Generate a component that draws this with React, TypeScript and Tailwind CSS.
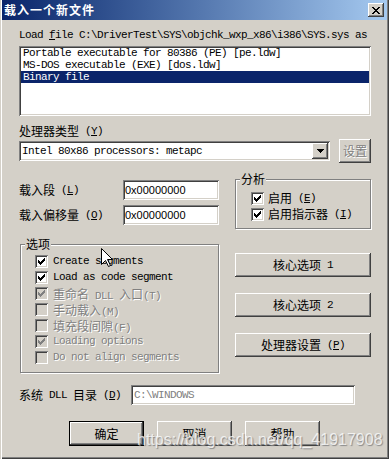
import React from 'react'

const cjk = "font-['Noto_Sans_CJK_SC',sans-serif] text-[12px] leading-[12px]"
const asc = "font-['Liberation_Mono','Noto_Sans_CJK_SC',monospace] text-[11px] leading-[12px] tracking-[-0.6px]"
const raised =
  'bg-[#d4d0c8] shadow-[inset_-1px_-1px_0_#404040,inset_1px_1px_0_#ffffff,inset_-2px_-2px_0_#808080,inset_2px_2px_0_#d4d0c8]'
const sunken =
  'bg-white shadow-[inset_1px_1px_0_#808080,inset_-1px_-1px_0_#ffffff,inset_2px_2px_0_#404040,inset_-2px_-2px_0_#d4d0c8]'
const off = 'text-[#808080] [text-shadow:1px_1px_0_#ffffff]'

function Check({ checked, disabled }: { checked?: boolean; disabled?: boolean }) {
  const c = disabled ? '#808080' : '#000000'
  return (
    <span
      className={`block w-[13px] h-[13px] shrink-0 ${disabled ? 'bg-[#d4d0c8]' : 'bg-white'} shadow-[inset_1px_1px_0_#808080,inset_-1px_-1px_0_#ffffff,inset_2px_2px_0_#404040,inset_-2px_-2px_0_#d4d0c8]`}
    >
      {checked && (
        <svg width="13" height="13" viewBox="0 0 13 13" shapeRendering="crispEdges">
          <g fill={c}>
            <rect x="9" y="3" width="1" height="1" />
            <rect x="8" y="4" width="2" height="1" />
            <rect x="3" y="5" width="1" height="1" />
            <rect x="7" y="5" width="3" height="1" />
            <rect x="3" y="6" width="2" height="1" />
            <rect x="6" y="6" width="3" height="1" />
            <rect x="3" y="7" width="5" height="1" />
            <rect x="4" y="8" width="3" height="1" />
            <rect x="5" y="9" width="1" height="1" />
          </g>
        </svg>
      )}
    </span>
  )
}

function Group({ title, className, children }: { title: string; className: string; children: React.ReactNode }) {
  return (
    <div className={`relative border border-[#808080] shadow-[inset_1px_1px_0_#ffffff,1px_1px_0_#ffffff] ${className}`}>
      <span className={`absolute -top-[7px] left-[4px] px-[1px] bg-[#d4d0c8] ${cjk}`}>{title}</span>
      {children}
    </div>
  )
}

function Btn({ className, children, disabled }: { className: string; children: React.ReactNode; disabled?: boolean }) {
  return (
    <div className={`flex items-center justify-center ${raised} ${cjk} ${disabled ? off : ''} ${className}`}>
      {children}
    </div>
  )
}

export default function App() {
  return (
    <div className="relative w-[389px] h-[459px] overflow-hidden bg-[#d4d0c8] text-black shadow-[inset_1px_0_0_#d4d0c8,inset_2px_0_0_#ffffff,inset_-1px_-1px_0_#404040,inset_-2px_-2px_0_#808080]">
      {/* title bar */}
      <div className="mx-[2px] h-[20px] flex items-center justify-between bg-linear-to-r from-[#0a246a] to-[#a6caf0] pl-[2px] pr-[3px]">
        <span className="font-['Noto_Sans_CJK_SC',sans-serif] text-[12px] font-bold tracking-[1px] text-white">
          载入一个新文件
        </span>
        <div className={`w-[16px] h-[14px] flex items-center justify-center ${raised}`}>
          <svg width="8" height="7" viewBox="0 0 8 7" shapeRendering="crispEdges">
            <path d="M0 0h2v1h-2zM6 0h2v1h-2zM1 1h2v1h-2zM5 1h2v1h-2zM2 2h4v1h-4zM3 3h2v1h-2zM2 4h4v1h-4zM1 5h2v1h-2zM5 5h2v1h-2zM0 6h2v1h-2zM6 6h2v1h-2z" fill="#000" />
          </svg>
        </div>
      </div>

      <div className="pl-[19px] pt-[9px]">
        <div className={`${asc} h-[12px]`}>
          Load <u>f</u>ile C:\DriverTest\SYS\objchk_wxp_x86\i386\SYS.sys as
        </div>

        <div className={`mt-[5px] w-[352px] h-[70px] pt-[1px] ${sunken}`}>
          <div className={`${asc} h-[12px] mx-[2px] px-[2px]`}>Portable executable for 80386 (PE) [pe.ldw]</div>
          <div className={`${asc} h-[12px] mx-[2px] px-[2px]`}>MS-DOS executable (EXE) [dos.ldw]</div>
          <div className={`${asc} h-[12px] mx-[2px] px-[2px] bg-[#0a246a] text-white`}>Binary file</div>
        </div>

        <div className="mt-[9px] h-[12px] flex items-center">
          <span className={cjk}>处理器类型</span>
          <span className={asc}>&nbsp;(<u>Y</u>)</span>
        </div>

        <div className="mt-[2px] h-[24px] flex items-center">
          <div className={`w-[311px] h-[20px] flex items-center justify-between pl-[3px] pr-[2px] ${sunken}`}>
            <span className={asc}>Intel 80x86 processors: metapc</span>
            <div className={`w-[16px] h-[16px] flex items-center justify-center ${raised}`}>
              <svg width="7" height="4" viewBox="0 0 7 4" shapeRendering="crispEdges">
                <path d="M0 0h7v1h-7zM1 1h5v1h-5zM2 2h3v1h-3zM3 3h1v1h-1z" fill="#000" />
              </svg>
            </div>
          </div>
          <Btn className="ml-[9px] w-[32px] h-[24px]" disabled>
            设置
          </Btn>
        </div>

        <div className="mt-[16px] flex items-start">
          <div className="w-[200px] pt-[1px]">
            <div className="h-[20px] flex items-center">
              <div className="w-[104px] flex items-center">
                <span className={cjk}>载入段</span>
                <span className={asc}>&nbsp;(<u>L</u>)</span>
              </div>
              <div className={`w-[96px] h-[20px] flex items-center pl-[2px] font-['Liberation_Sans',sans-serif] text-[11px] ${sunken}`}>
                0x00000000
              </div>
            </div>
            <div className="mt-[5px] h-[20px] flex items-center">
              <div className="w-[104px] flex items-center">
                <span className={cjk}>载入偏移量</span>
                <span className={asc}>&nbsp;(<u>O</u>)</span>
              </div>
              <div className={`w-[96px] h-[20px] flex items-center pl-[2px] font-['Liberation_Sans',sans-serif] text-[11px] ${sunken}`}>
                0x00000000
              </div>
            </div>
          </div>

          <Group title="分析" className="ml-[16px] w-[136px] h-[50px] pt-[10px] pl-[15px]">
            <div className="h-[16px] flex items-center gap-[4px]">
              <Check checked />
              <span className={cjk}>启用</span>
              <span className={`${asc} -ml-[4px]`}>&nbsp;(<u>E</u>)</span>
            </div>
            <div className="h-[16px] flex items-center gap-[4px]">
              <Check checked />
              <span className={cjk}>启用指示器</span>
              <span className={`${asc} -ml-[4px]`}>&nbsp;(<u>I</u>)</span>
            </div>
          </Group>
        </div>

        <div className="mt-[15px] flex items-start">
          <Group title="选项" className="ml-[1px] w-[199px] h-[129px] pt-[8px] pl-[14px]">
            <div className="h-[16px] flex items-center gap-[5px]">
              <Check checked />
              <span className={asc}>Create segments</span>
            </div>
            <div className="h-[16px] flex items-center gap-[5px]">
              <Check checked />
              <span className={asc}>Load as code segment</span>
            </div>
            <div className={`h-[16px] flex items-center gap-[5px] ${off}`}>
              <Check checked disabled />
              <span>
                <span className={cjk}>重命名</span>
                <span className={asc}>&nbsp;DLL&nbsp;</span>
                <span className={cjk}>入口</span>
                <span className={asc}>(T)</span>
              </span>
            </div>
            <div className={`h-[16px] flex items-center gap-[5px] ${off}`}>
              <Check disabled />
              <span>
                <span className={cjk}>手动载入</span>
                <span className={asc}>(M)</span>
              </span>
            </div>
            <div className={`h-[16px] flex items-center gap-[5px] ${off}`}>
              <Check disabled />
              <span>
                <span className={cjk}>填充段间隙</span>
                <span className={asc}>(F)</span>
              </span>
            </div>
            <div className={`h-[16px] flex items-center gap-[5px] ${off}`}>
              <Check checked disabled />
              <span className={asc}>Loading options</span>
            </div>
            <div className={`h-[16px] flex items-center gap-[5px] ${off}`}>
              <Check disabled />
              <span className={asc}>Do not align segments</span>
            </div>
          </Group>

          <div className="ml-[16px] mt-[9px] flex flex-col gap-[16px]">
            <Btn className="w-[136px] h-[24px]">
              核心选项<span className={asc}>&nbsp;1</span>
            </Btn>
            <Btn className="w-[136px] h-[24px]">
              核心选项<span className={asc}>&nbsp;2</span>
            </Btn>
            <Btn className="w-[136px] h-[24px]">
              处理器设置<span className={asc}>&nbsp;(<u>P</u>)</span>
            </Btn>
          </div>
        </div>

        <div className="mt-[12px] h-[20px] flex items-center">
          <div className="w-[112px] flex items-center">
            <span className={cjk}>系统</span>
            <span className={asc}>&nbsp;DLL&nbsp;</span>
            <span className={cjk}>目录</span>
            <span className={asc}>&nbsp;(<u>D</u>)</span>
          </div>
          <div className={`w-[224px] h-[20px] flex items-center pl-[3px] text-[#808080] ${asc} ${sunken}`}>
            C:\WINDOWS
          </div>
        </div>

        <div className="mt-[16px] ml-[50px] flex gap-[13px]">
          <div className="w-[75px] h-[25px] border border-black">
            <Btn className="w-full h-full">确定</Btn>
          </div>
          <Btn className="w-[75px] h-[25px]">取消</Btn>
          <Btn className="w-[75px] h-[25px]">帮助</Btn>
        </div>
      </div>

      {/* watermark */}
      <div className="absolute left-[137px] top-[430px] font-['Liberation_Sans',sans-serif] text-[16px] leading-[20px] text-white/75 [text-shadow:1px_1px_1px_#8a8a8a]">
        https://blog.csdn.net/qq_41917908
      </div>

      {/* mouse pointer */}
      <svg className="absolute left-[101px] top-[248px]" width="13" height="20" viewBox="0 0 13 20">
        <path d="M0.5 0.5 L0.5 16.5 L4.5 12.5 L7.5 18.5 L9.5 17.5 L6.5 11.5 L11.5 11.5 Z" fill="#fff" stroke="#000" strokeWidth="1" />
      </svg>
    </div>
  )
}
